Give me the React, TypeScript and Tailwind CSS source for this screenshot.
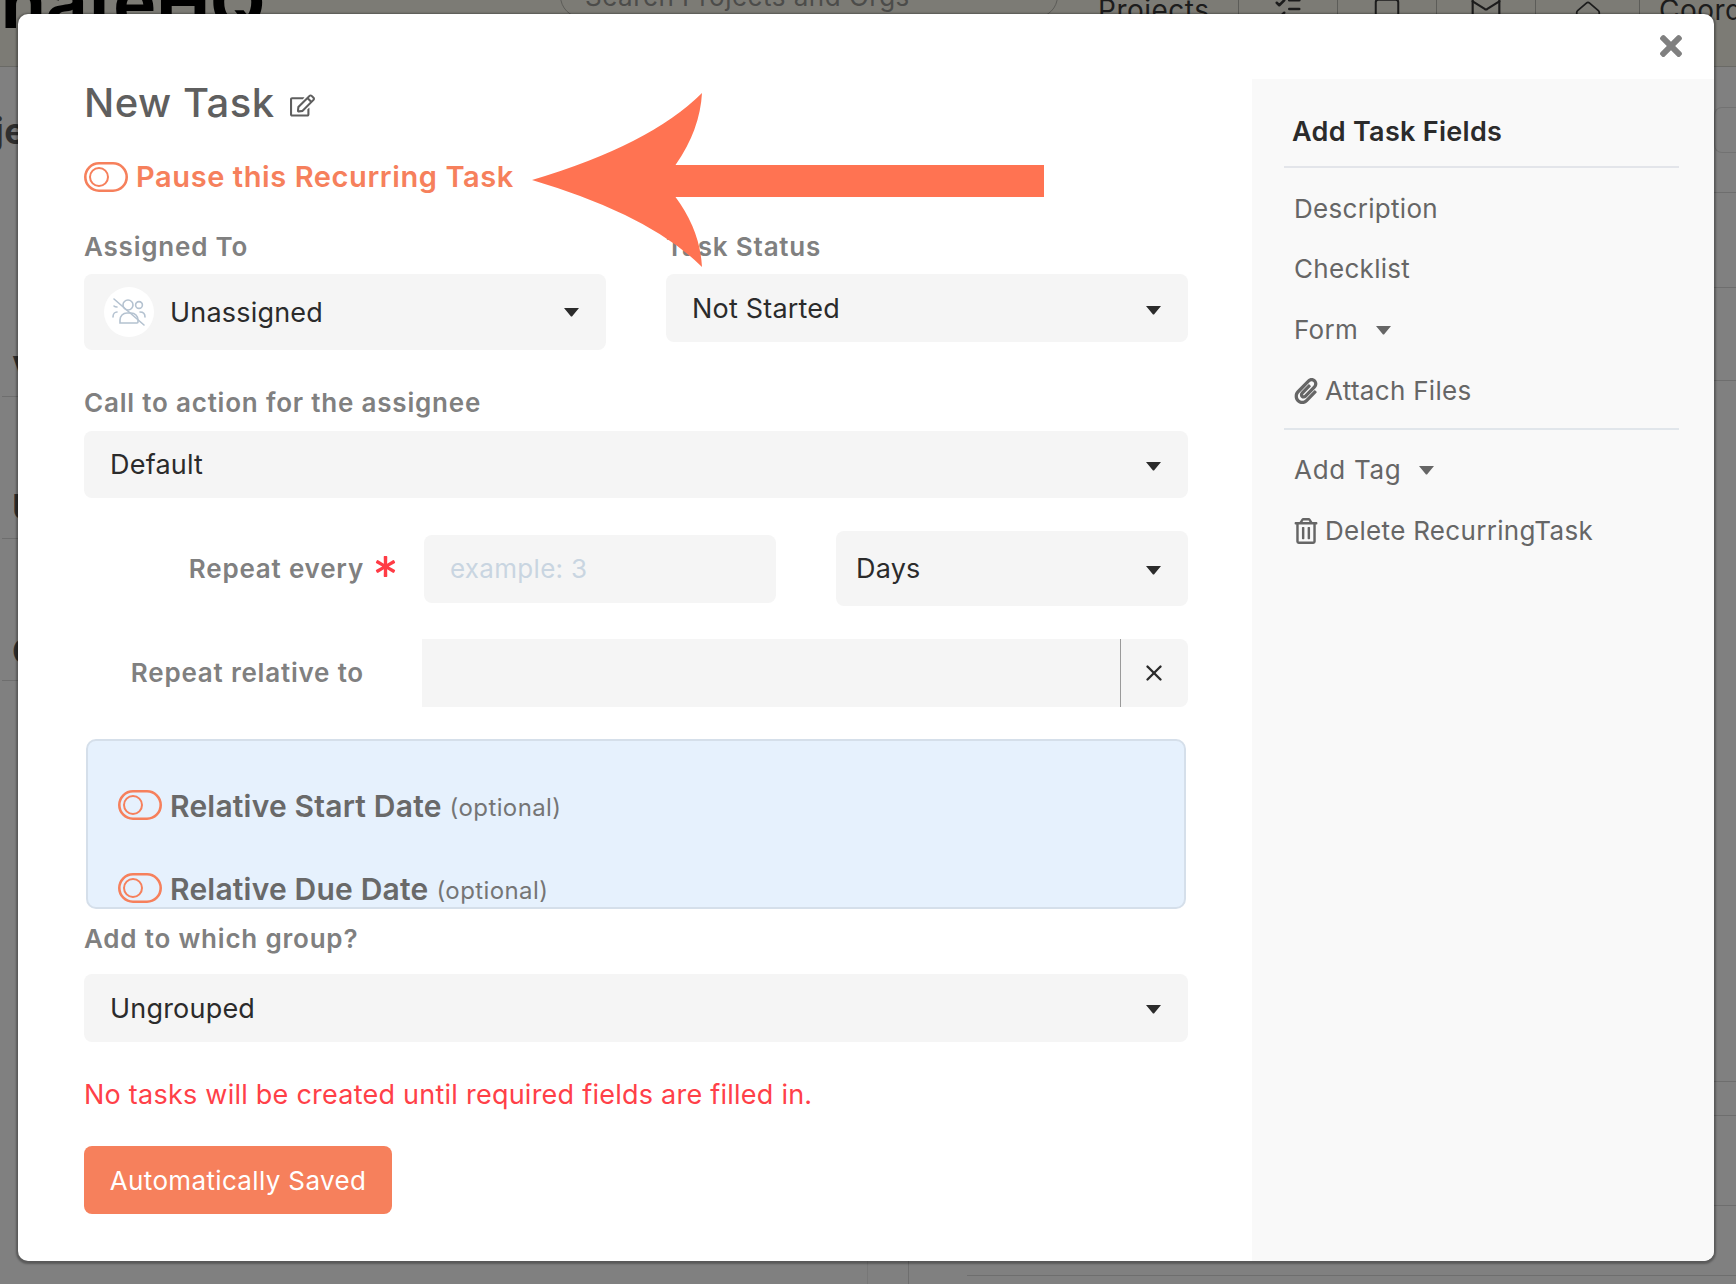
import React from 'react';
import { FaAsterisk, FaPaperclip, FaRegEdit, FaRegTrashAlt, FaTimes } from 'react-icons/fa';
import { Home, ListChecks, Mail, Square, X } from 'lucide-react';

const Caret = ({ className = 'text-[#2b2b2b]' }: { className?: string }) => (
  <svg width="17" height="10" viewBox="0 0 17 10" className={`shrink-0 ${className}`}>
    <path d="M1 1h15l-6.600 8a1 1 0 0 1-1.800 0z" fill="currentColor" />
  </svg>
);

const Toggle = () => (
  <svg width="44" height="30" viewBox="0 0 44 30" className="shrink-0 text-[#f6805c]" fill="none" stroke="currentColor">
    <rect x="1.300" y="1.300" width="41.400" height="27.400" rx="13.700" strokeWidth="2.600" />
    <circle cx="15" cy="15" r="9" strokeWidth="2" />
  </svg>
);

const NoAssignee = () => (
  <svg width="36" height="30" viewBox="0 0 36 30" fill="none" stroke="#b4c2d0" strokeWidth="1.600" strokeLinecap="round">
    <path d="M3 2l30 26" />
    <circle cx="17" cy="8" r="5" />
    <circle cx="28" cy="8" r="3.400" />
    <path d="M9 26v-3c0-4 3-7 7-7h4c4 0 7 3 7 7v2a1 1 0 0 1-1 1H9z" />
    <path d="M29 15c3 0 5 2 5 5" />
    <path d="M3 9c1 1 2 1 3 1M2 20c0-3 2-5 4-5" />
  </svg>
);

const Field = ({ children, className }: { children: React.ReactNode; className: string }) => (
  <div className={`flex items-center justify-between rounded-lg bg-[#f5f5f5] text-[27px] tracking-[0.2px] text-[#2b2b2b] ${className}`}>
    {children}
  </div>
);

const Label = ({ children }: { children: React.ReactNode }) => (
  <div className="h-[30px] text-[26px] leading-[30px] font-semibold tracking-[0.8px] text-[#808080]">{children}</div>
);

const SideItem = ({ children, className }: { children: React.ReactNode; className: string }) => (
  <div className={`flex items-center pl-[10px] text-[26px] leading-[32px] tracking-[0.3px] text-[#666666] ${className}`}>{children}</div>
);

const DateToggle = ({ title }: { title: string }) => (
  <div className="flex h-[30px] items-center gap-2">
    <Toggle />
    <span className="mt-[2px] text-[30px] font-semibold tracking-[0.2px] text-[#696969]">{title}</span>
    <span className="mt-[6px] text-[24px] tracking-[0.4px] text-[#757575]">(optional)</span>
  </div>
);

const HeaderIcon = ({ children, width }: { children: React.ReactNode; width: string }) => (
  <div className={`flex h-[14px] shrink-0 justify-center border-l border-[#5c5c58] ${width}`}>{children}</div>
);

export default function App() {
  return (
    <div className="relative h-[1284px] w-[1736px] overflow-hidden bg-[#808080] font-[family-name:Inter,sans-serif] tracking-[0.5px]">
      {/* page behind the dialog */}
      <div className="flex h-[67px] items-start overflow-hidden border-b border-[#6a6a66] bg-[#7c7b75] text-[#1c1c1c]">
        <div className="ml-[1px] -mt-[34px] w-[559px] shrink-0 text-[72px] leading-[72px] font-bold tracking-normal text-black">nateHQ</div>
        <div className="-mt-[26px] flex h-[44px] w-[498px] shrink-0 items-center rounded-[22px] border border-[#5c5c58] pl-[24px] text-[26px] text-[#4c4c4a]">
          Search Projects and Orgs
        </div>
        <div className="-mt-[6px] ml-[40px] w-[140px] shrink-0 text-[28px] leading-[32px]">Projects</div>
        <HeaderIcon width="w-[99px]">
          <ListChecks size={30} strokeWidth={2} className="-mt-[6px]" />
        </HeaderIcon>
        <HeaderIcon width="w-[99px]">
          <Square size={30} strokeWidth={1.600} className="-mt-[4px]" />
        </HeaderIcon>
        <HeaderIcon width="w-[99px]">
          <Mail size={32} strokeWidth={1.600} className="-mt-[8px]" />
        </HeaderIcon>
        <HeaderIcon width="w-[104px]">
          <Home size={30} strokeWidth={1.400} />
        </HeaderIcon>
        <div className="-mt-[6px] h-[20px] shrink-0 border-l border-[#5c5c58] pl-[19px] text-[28px] leading-[32px]">Coord</div>
      </div>
      <div className="flex h-[1193px] justify-between">
        <div className="w-[18px] overflow-hidden pl-[2px] text-[36px] font-bold text-[#2e2e2e]">
          <div className="-ml-[8px] h-[123px] pt-[42px] leading-[44px]">je</div>
          <div className="flex h-[207px] items-end border-b border-[#6e6e6e] pb-[5px] pl-[10px] leading-[44px]">V</div>
          <div className="flex h-[142px] items-end border-b border-[#6e6e6e] pb-[9px] pl-[10px] leading-[44px]">U</div>
          <div className="flex h-[142px] items-end border-b border-[#6e6e6e] pb-[7px] pl-[10px] leading-[44px]">C</div>
        </div>
        <div className="w-[22px]">
          <div className="h-[126px] border-b border-[#6e6e6e] pt-[40px]">
            <div className="h-[46px] rounded-l-lg border border-r-0 border-[#727272]" />
          </div>
          <div className="h-[95px] border-b border-[#6e6e6e]" />
          <div className="h-[93px] border-b border-[#6e6e6e]" />
          <div className="h-[701px] border-b border-[#6e6e6e]" />
          <div className="h-[34px] border-b border-[#6e6e6e]" />
          <div className="h-[90px] border-b border-[#6e6e6e]" />
        </div>
      </div>
      <div className="flex h-[24px] pl-[867px]">
        <div className="w-[41px] border-l border-[#777777]" />
        <div className="w-[59px] border-l border-[#6e6e6e]" />
        <div className="mt-[15px] h-px flex-1 bg-[#6e6e6e]" />
      </div>

      {/* dialog */}
      <div className="absolute left-[18px] top-[14px] flex h-[1247px] w-[1696px] overflow-hidden rounded-[10px] bg-white shadow-[0_1px_2px_2px_rgba(0,0,0,0.3)]">
        <div className="w-[1234px] shrink-0 pl-[66px] pr-[64px] pt-[66px]">
          <div className="flex h-[46px] items-center text-[40px] font-medium text-[#5f5f5f]">
            New Task
            <FaRegEdit className="ml-[15px] mt-[4px] text-[25px] font-normal" />
          </div>
          <div className="mt-[36px] flex h-[30px] items-center gap-2 text-[29px] font-semibold tracking-[0.6px] text-[#f6805c]">
            <Toggle />
            Pause this Recurring Task
          </div>

          <div className="mt-[40px] flex items-start justify-between">
            <div className="w-[522px]">
              <Label>Assigned To</Label>
              <Field className="mt-[12px] h-[76px] pl-[20px] pr-[26px]">
                <div className="flex items-center gap-[16px]">
                  <div className="flex h-[50px] w-[50px] items-center justify-center rounded-full bg-white">
                    <NoAssignee />
                  </div>
                  <span className="pt-[2px]">Unassigned</span>
                </div>
                <Caret />
              </Field>
            </div>
            <div className="w-[522px]">
              <Label>Task Status</Label>
              <Field className="mt-[12px] h-[68px] pl-[26px] pr-[26px] pt-[3px]">
                Not Started
                <Caret />
              </Field>
            </div>
          </div>

          <div className="mt-[38px]">
            <Label>Call to action for the assignee</Label>
            <Field className="mt-[13px] h-[67px] pl-[26px] pr-[26px] pt-[2px]">
              Default
              <Caret />
            </Field>
          </div>

          <div className="mt-[33px] flex h-[75px] items-center">
            <div className="w-[280px] shrink-0 text-right">
              <Label>Repeat every</Label>
            </div>
            <FaAsterisk className="ml-[11px] mb-[4px] shrink-0 text-[21px] text-[#ff3b45]" />
            <div className="ml-[28px] flex h-[68px] w-[352px] shrink-0 items-center rounded-lg bg-[#f5f5f5] pl-[26px] text-[26px] tracking-[0.3px] text-[#c9d5e1]">
              example: 3
            </div>
            <Field className="ml-[60px] h-[75px] w-[352px] shrink-0 pl-[20px] pr-[26px] pt-[2px]">
              Days
              <Caret />
            </Field>
          </div>

          <div className="mt-[33px] flex h-[68px] items-center">
            <div className="w-[280px] shrink-0 text-right">
              <Label>Repeat relative to</Label>
            </div>
            <div className="ml-[58px] flex h-[68px] flex-1 rounded-r-lg bg-[#f5f5f5]">
              <div className="flex-1 border-r border-[#9a9a9a]" />
              <div className="flex w-[67px] items-center justify-center pr-[2px] text-[#2b2b2b]">
                <X size={26} strokeWidth={2.200} />
              </div>
            </div>
          </div>

          <div className="mx-[2px] mt-[32px] flex h-[170px] flex-col gap-[53px] overflow-hidden rounded-[10px] border-2 border-[#d5dfea] bg-[#e6f1fd] pl-[30px] pt-[49px]">
            <div className="shrink-0">
              <DateToggle title="Relative Start Date" />
            </div>
            <div className="shrink-0">
              <DateToggle title="Relative Due Date" />
            </div>
          </div>

          <div className="mt-[15px]">
            <Label>Add to which group?</Label>
            <Field className="mt-[20px] h-[68px] pl-[26px] pr-[26px] pt-[2px]">
              Ungrouped
              <Caret />
            </Field>
          </div>

          <div className="mt-[38px] h-[30px] text-[27px] leading-[30px] tracking-[0.24px] text-[#ff4048]">
            No tasks will be created until required fields are filled in.
          </div>
          <div className="mt-[36px] flex h-[68px] w-[308px] items-center justify-center rounded-lg bg-[#f6805c] text-[26px] tracking-[0.35px] text-white">
            Automatically Saved
          </div>
        </div>

        <div className="mt-[65px] flex-1 bg-[#f9f9f9] pl-[32px] pr-[35px]">
          <div className="h-[89px] border-b-2 border-[#e3e5ea] pl-[8px] pt-[35px] text-[27px] leading-[36px] font-semibold tracking-[0.3px] text-[#2b2b2b]">
            Add Task Fields
          </div>
          <SideItem className="mt-[25px]">Description</SideItem>
          <SideItem className="mt-[28px]">Checklist</SideItem>
          <SideItem className="mt-[29px]">
            Form
            <span className="ml-[17px]">
              <Caret className="text-[#666666]" />
            </span>
          </SideItem>
          <SideItem className="mt-[29px] gap-[6px]">
            <FaPaperclip className="-ml-[1px] text-[26px]" />
            Attach Files
          </SideItem>
          <div className="mt-[21px] h-[2px] bg-[#e1e6eb]" />
          <SideItem className="mt-[24px]">
            <span className="tracking-[0.7px]">Add Tag</span>
            <span className="ml-[17px]">
              <Caret className="text-[#666666]" />
            </span>
          </SideItem>
          <SideItem className="mt-[29px] gap-[6px]">
            <FaRegTrashAlt className="-ml-[1px] text-[26px]" />
            Delete RecurringTask
          </SideItem>
        </div>

        <FaTimes className="absolute left-[1637px] top-[16px] text-[32px] text-[#808080]" />

        {/* callout arrow */}
        <svg width="512" height="174" viewBox="0 0 512 174" className="absolute left-[514px] top-[79px]">
          <path
            d="M0 87Q118 52 170 0Q168 37 143.500 72H512V104H143.500Q168 137 170 174Q118 122 0 87Z"
            fill="#ff7352"
          />
        </svg>
      </div>
    </div>
  );
}
